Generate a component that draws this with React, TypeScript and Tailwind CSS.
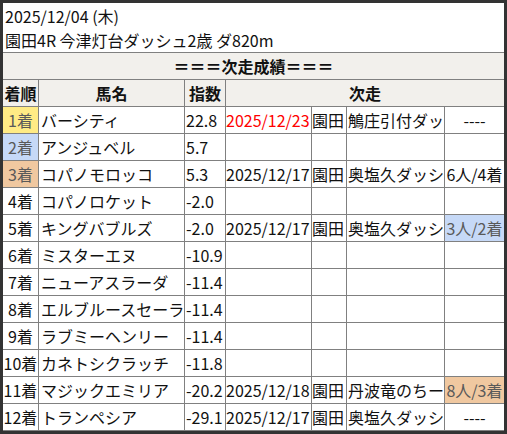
const rows = [
  { rank: "1着", rankBg: "bg-[#ffeb85]", name: "バーシティ", idx: "22.8", date: "2025/12/23", red: true, place: "園田", race: "鵤庄引付ダッ", res: "----" },
  { rank: "2着", rankBg: "bg-[#c6d9f7]", name: "アンジュベル", idx: "5.7" },
  { rank: "3着", rankBg: "bg-[#f0c8a0]", name: "コパノモロッコ", idx: "5.3", date: "2025/12/17", place: "園田", race: "奥塩久ダッシ", res: "6人/4着" },
  { rank: "4着", name: "コパノロケット", idx: "-2.0" },
  { rank: "5着", name: "キングバブルズ", idx: "-2.0", date: "2025/12/17", place: "園田", race: "奥塩久ダッシ", res: "3人/2着", resBg: "bg-[#c6d9f7]" },
  { rank: "6着", name: "ミスターエヌ", idx: "-10.9" },
  { rank: "7着", name: "ニューアスラーダ", idx: "-11.4" },
  { rank: "8着", name: "エルブルースセーラ", idx: "-11.4" },
  { rank: "9着", name: "ラブミーヘンリー", idx: "-11.4" },
  { rank: "10着", name: "カネトシクラッチ", idx: "-11.8" },
  { rank: "11着", name: "マジックエミリア", idx: "-20.2", date: "2025/12/18", place: "園田", race: "丹波竜のちー", res: "8人/3着", resBg: "bg-[#f0c8a0]" },
  { rank: "12着", name: "トランペシア", idx: "-29.1", date: "2025/12/17", place: "園田", race: "奥塩久ダッシ", res: "----" },
];

const cell = "h-[27px] border-r border-b border-[#808080] leading-[26px] whitespace-nowrap overflow-hidden";

export default function App() {
  return (
    <div
      className="w-[507px] h-[434px] border-[3px] border-[#333] bg-white text-[16px] text-[#111] overflow-hidden"
      style={{ fontFamily: '"Noto Sans CJK JP", "Noto Sans", sans-serif' }}
    >
      {/* title */}
      <div className="h-[50px] border-b border-[#808080] px-[2px] pt-[1px] leading-[24px]">
        <div>2025/12/04 (木)</div>
        <div>園田4R 今津灯台ダッシュ2歳 ダ820m</div>
      </div>

      <div className="h-[27px] border-b border-[#808080] bg-[#f2f0ec] text-center font-bold leading-[26px]">
        ＝＝＝次走成績＝＝＝
      </div>

      <div className="grid grid-cols-[36px_146px_41px_86px_35px_98px_59px]">
        <div className={`${cell} bg-[#f2f0ec] text-center font-bold`}>着順</div>
        <div className={`${cell} bg-[#f2f0ec] text-center font-bold`}>馬名</div>
        <div className={`${cell} bg-[#f2f0ec] text-center font-bold`}>指数</div>
        <div className={`${cell} col-span-4 border-r-0 bg-[#f2f0ec] text-center font-bold`}>次走</div>

        {rows.map((r) => (
          <div key={r.rank} className="contents">
            <div className={`${cell} text-center ${r.rankBg ? `${r.rankBg} text-[#595959]` : ""}`}>{r.rank}</div>
            <div className={`${cell} pl-[2px]`}>{r.name}</div>
            <div className={`${cell} pl-[1px]`}>{r.idx}</div>
            <div className={`${cell} ${r.red ? "text-[#ff0000]" : ""}`}>{r.date ?? ""}</div>
            <div className={`${cell}`}>{r.place ?? ""}</div>
            <div className={`${cell} pl-[1px]`}>{r.race ?? ""}</div>
            <div className={`${cell} border-r-0 text-center ${r.resBg ? `${r.resBg} text-[#595959]` : ""}`}>{r.res ?? ""}</div>
          </div>
        ))}
      </div>
    </div>
  );
}
